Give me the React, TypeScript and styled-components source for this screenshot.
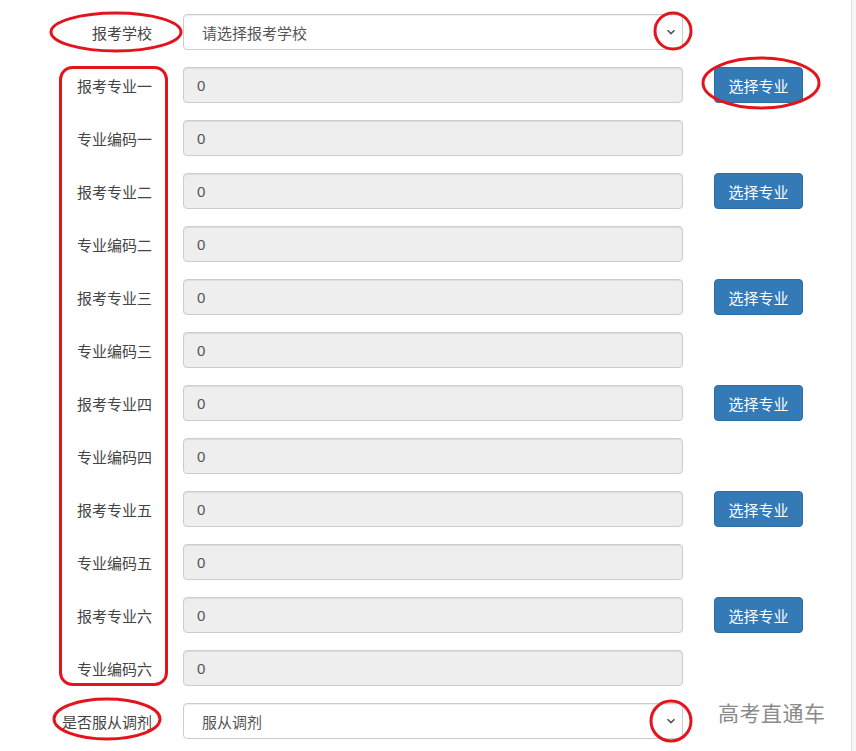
import React from "react";
import styled, { createGlobalStyle } from "styled-components";

const Global = createGlobalStyle`
  html, body { margin: 0; padding: 0; background: #fff; }
  body { font-family: "Liberation Sans", "Noto Sans CJK SC", sans-serif; }
`;

const Page = styled.div`
  position: relative;
  width: 856px;
  height: 751px;
  display: flex;
  overflow: hidden;
`;

const Form = styled.div`
  flex: 1;
  display: flex;
  flex-direction: column;
  gap: 17px;
  padding-top: 14px;
`;

const Strip = styled.div`
  width: 4px;
  border-left: 1px solid #e2e2e2;
  background: #f6f6f6;
`;

const Row = styled.div`
  display: grid;
  grid-template-columns: 152px 500px 89px auto;
  column-gap: 31px;
  align-items: center;
  height: 36px;
`;

const Label = styled.div`
  text-align: right;
  font-size: 15px;
  color: #444;
  white-space: nowrap;
`;

const Field = styled.div<{ $disabled?: boolean }>`
  position: relative;
  box-sizing: border-box;
  height: 36px;
  border: 1px solid #ccc;
  border-radius: 4px;
  background: ${(p) => (p.$disabled ? "#eee" : "#fff")};
  box-shadow: inset 0 1px 1px rgba(0, 0, 0, 0.075);
  display: flex;
  align-items: center;
  padding-left: ${(p) => (p.$disabled ? "13px" : "18px")};
  font-size: 15px;
  color: #555;
`;

const Chevron = styled.svg`
  position: absolute;
  right: 6px;
  top: 50%;
  margin-top: -4px;
`;

const Button = styled.button`
  box-sizing: border-box;
  height: 36px;
  width: 89px;
  border: 1px solid #2e6da4;
  border-radius: 4px;
  background: #337ab7;
  color: #fff;
  font-family: "Liberation Sans", "Noto Sans CJK SC", sans-serif;
  font-size: 15px;
  padding: 0;
`;

const Watermark = styled.div`
  font-size: 21px;
  color: #8a8a8a;
  padding-left: 4px;
  margin-top: -18px;
  letter-spacing: 0.5px;
  white-space: nowrap;
  grid-column: 3 / span 2;
`;

const Marks = styled.svg`
  position: absolute;
  left: 0;
  top: 0;
  pointer-events: none;
`;

const nums = ["一", "二", "三", "四", "五", "六"];

const Down = () => (
  <Chevron width="10" height="8" viewBox="0 0 10 8">
    <path d="M1.5 2.2 L5 5.6 L8.5 2.2" fill="none" stroke="#555" strokeWidth="1.6" />
  </Chevron>
);

export default function App() {
  return (
    <>
      <Global />
      <Page>
        <Form>
          <Row>
            <Label>报考学校</Label>
            <Field>
              请选择报考学校
              <Down />
            </Field>
          </Row>
          {nums.map((n) => (
            <React.Fragment key={n}>
              <Row>
                <Label>报考专业{n}</Label>
                <Field $disabled>0</Field>
                <Button>选择专业</Button>
              </Row>
              <Row>
                <Label>专业编码{n}</Label>
                <Field $disabled>0</Field>
              </Row>
            </React.Fragment>
          ))}
          <Row>
            <Label>是否服从调剂</Label>
            <Field>
              服从调剂
              <Down />
            </Field>
            <Watermark>高考直通车</Watermark>
          </Row>
        </Form>
        <Strip />
        <Marks width="856" height="751" viewBox="0 0 856 751">
          <g fill="none" stroke="#e4141c" strokeWidth="3">
            <ellipse cx="116" cy="32" rx="65" ry="19" />
            <rect x="60.5" y="67.5" width="106" height="617" rx="12" />
            <circle cx="673" cy="31" r="18" />
            <ellipse cx="761" cy="83" rx="58" ry="25" />
            <ellipse cx="107" cy="719" rx="53" ry="20" />
            <circle cx="671" cy="721" r="20" />
          </g>
        </Marks>
      </Page>
    </>
  );
}
